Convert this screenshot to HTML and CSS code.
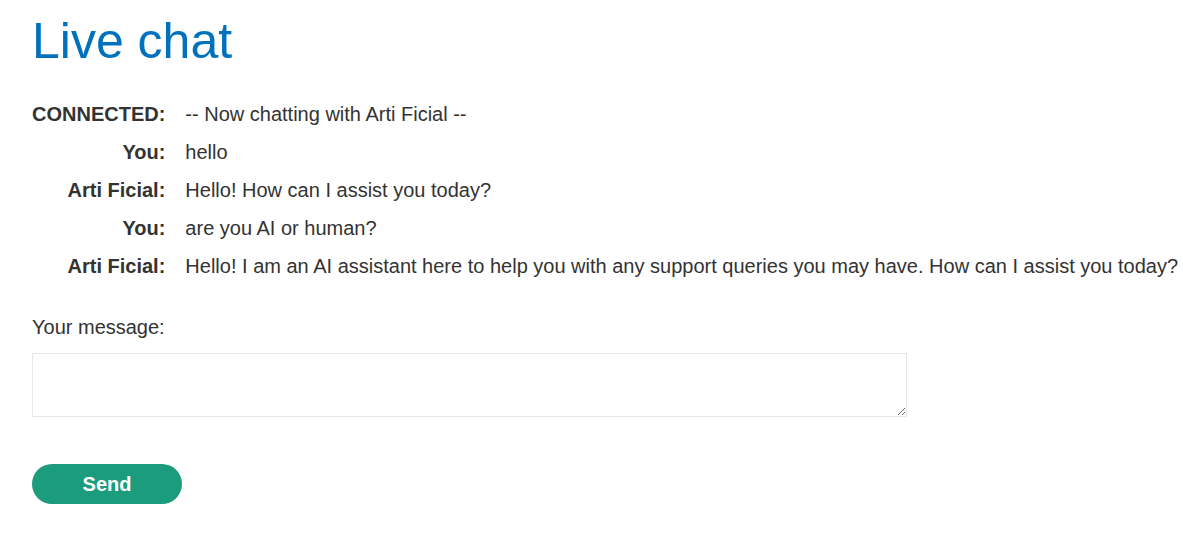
FILE: index.html
```html
<!DOCTYPE html>
<html lang="en">
<head>
<meta charset="utf-8">
<title>Live chat</title>
<link rel="stylesheet" href="styles.css">
</head>
<body>
<div class="page">
  <h1 class="title">Live chat</h1>
  <div class="chat">
    <div class="who">CONNECTED:</div><div class="msg">-- Now chatting with Arti Ficial --</div>
    <div class="who">You:</div><div class="msg">hello</div>
    <div class="who">Arti Ficial:</div><div class="msg">Hello! How can I assist you today?</div>
    <div class="who">You:</div><div class="msg">are you AI or human?</div>
    <div class="who">Arti Ficial:</div><div class="msg">Hello! I am an AI assistant here to help you with any support queries you may have. How can I assist you today?</div>
  </div>
  <form class="form">
    <label class="label" for="message">Your message:</label>
    <textarea class="input" id="message"></textarea>
    <button class="send" type="button">Send</button>
  </form>
</div>
</body>
</html>
```
FILE: styles.css
```css
html, body {
  margin: 0;
  padding: 0;
  background: #ffffff;
}
body {
  font-family: "Liberation Sans", Arial, sans-serif;
  color: #333332;
  font-size: 20px;
}
.page {
  padding: 13px 0 0 32px;
}
.title {
  margin: 0;
  font-size: 50px;
  font-weight: normal;
  color: #0071bc;
  line-height: 57px;
}
.chat {
  margin-top: 33px;
  display: grid;
  grid-template-columns: max-content max-content;
  column-gap: 20px;
  row-gap: 15px;
  line-height: 23px;
}
.who {
  font-weight: bold;
  text-align: right;
}
.msg {
  white-space: nowrap;
}
.form {
  display: flex;
  flex-direction: column;
  align-items: flex-start;
  margin-top: 38px;
}
.label {
  line-height: 23px;
}
.input {
  box-sizing: border-box;
  margin-top: 14px;
  width: 875px;
  height: 64px;
  border: 1px solid #e6e6e6;
  border-radius: 0;
  padding: 6px;
  font-family: inherit;
  font-size: 16px;
}
.send {
  margin-top: 47px;
  width: 150px;
  height: 40px;
  border: none;
  border-radius: 20px;
  background: #1a9c7d;
  color: #ffffff;
  font-family: "Liberation Sans", Arial, sans-serif;
  font-weight: bold;
  font-size: 20px;
  padding: 0;
}
```
